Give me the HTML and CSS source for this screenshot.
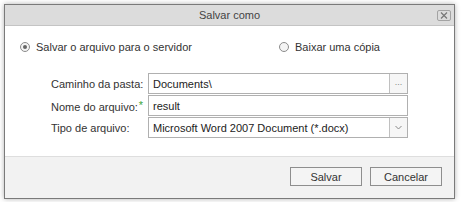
FILE: index.html
```html
<!DOCTYPE html>
<html lang="pt">
<head>
    <meta charset="UTF-8">
    <title>Salvar como</title>
    <link rel="stylesheet" href="styles.css">
</head>
<body>
    <div class="dialog">
        <div class="titlebar">
            <span class="title">Salvar como</span>
            <span class="close-btn">
                <svg width="8" height="7" viewBox="0 0 8 7"><path d="M1 0.5 L7 6.5 M7 0.5 L1 6.5" stroke="#777" stroke-width="1.2"/></svg>
            </span>
        </div>

        <div class="content">
            <div class="radio-row">
                <label class="radio-opt first"><span class="radio checked"></span> Salvar o arquivo para o servidor</label>
                <label class="radio-opt second"><span class="radio"></span> Baixar uma cópia</label>
            </div>

            <div class="form">
                <div class="form-row">
                    <span class="label">Caminho da pasta:</span>
                    <div class="field">
                        <span class="value">Documents\</span>
                        <span class="side-btn dots">...</span>
                    </div>
                </div>
                <div class="form-row">
                    <span class="label">Nome do arquivo:<span class="req">*</span></span>
                    <div class="field">
                        <span class="value">result</span>
                    </div>
                </div>
                <div class="form-row">
                    <span class="label">Tipo de arquivo:</span>
                    <div class="field">
                        <span class="value">Microsoft Word 2007 Document (*.docx)</span>
                        <span class="side-btn">
                            <svg width="7" height="5" viewBox="0 0 7 5"><path d="M0.5 1 L3.5 4 L6.5 1" fill="none" stroke="#888" stroke-width="1"/></svg>
                        </span>
                    </div>
                </div>
            </div>
        </div>

        <div class="footer">
            <button class="btn">Salvar</button>
            <button class="btn">Cancelar</button>
        </div>
    </div>
</body>
</html>
```

FILE: styles.css
```css
* {
    margin: 0;
    padding: 0;
    box-sizing: border-box;
}

body {
    background-color: #ffffff;
    font-family: "Liberation Sans", Arial, sans-serif;
    font-size: 11px;
    color: #333;
}

/* Dialog */
.dialog {
    margin: 4px;
    width: 451px;
    height: 195px;
    border: 1px solid #7a7a7a;
    background-color: #fff;
    box-shadow: 0 0 5px rgba(0, 0, 0, 0.3);
    display: flex;
    flex-direction: column;
}

.titlebar {
    height: 21px;
    background-color: #dcdcdc;
    border-bottom: 1px solid #c4c4c4;
    display: flex;
    align-items: center;
    justify-content: center;
    position: relative;
}

.title {
    color: #444;
}

.close-btn {
    position: absolute;
    right: 3px;
    top: 5px;
    width: 14px;
    height: 11px;
    border: 1px solid #a3a3a3;
    border-radius: 2px;
    display: flex;
    align-items: center;
    justify-content: center;
}

/* Content */
.content {
    flex: 1;
    padding: 13px 0 0 0;
}

.radio-row {
    display: flex;
    align-items: center;
    height: 16px;
}

.radio-opt {
    display: flex;
    align-items: center;
    gap: 6px;
    white-space: nowrap;
}

.radio-opt.first {
    margin-left: 15px;
    width: 259px;
}

.radio {
    width: 10px;
    height: 10px;
    border: 1px solid #8c8c8c;
    border-radius: 50%;
    background-color: #f4f4f4;
    display: flex;
    align-items: center;
    justify-content: center;
}

.radio.checked::after {
    content: "";
    width: 4px;
    height: 4px;
    border-radius: 50%;
    background-color: #666;
}

.form {
    margin-top: 18px;
    margin-left: 46px;
    display: flex;
    flex-direction: column;
    gap: 1px;
}

.form-row {
    display: flex;
    align-items: center;
    height: 21px;
}

.label {
    width: 97px;
    white-space: nowrap;
}

.req {
    color: #3aa53a;
    vertical-align: 2px;
    margin-left: 1px;
}

.field {
    width: 260px;
    height: 21px;
    border: 1px solid #b0b0b0;
    display: flex;
    align-items: center;
}

.value {
    flex: 1;
    padding-left: 4px;
    color: #222;
    white-space: nowrap;
}

.side-btn {
    width: 18px;
    height: 100%;
    border-left: 1px solid #c0c0c0;
    background-color: #f6f6f6;
    display: flex;
    align-items: center;
    justify-content: center;
}

.dots {
    color: #888;
    font-size: 9px;
    padding-bottom: 3px;
}

/* Footer */
.footer {
    height: 42px;
    border-top: 1px solid #dedede;
    background-color: #f2f2f2;
    display: flex;
    justify-content: flex-end;
    align-items: flex-start;
    padding: 10px 12px 0 0;
    gap: 8px;
}

.btn {
    width: 72px;
    height: 19px;
    border: 1px solid #8e8e8e;
    background-color: #f4f4f4;
    font-family: "Liberation Sans", Arial, sans-serif;
    font-size: 11px;
    color: #333;
}
```
